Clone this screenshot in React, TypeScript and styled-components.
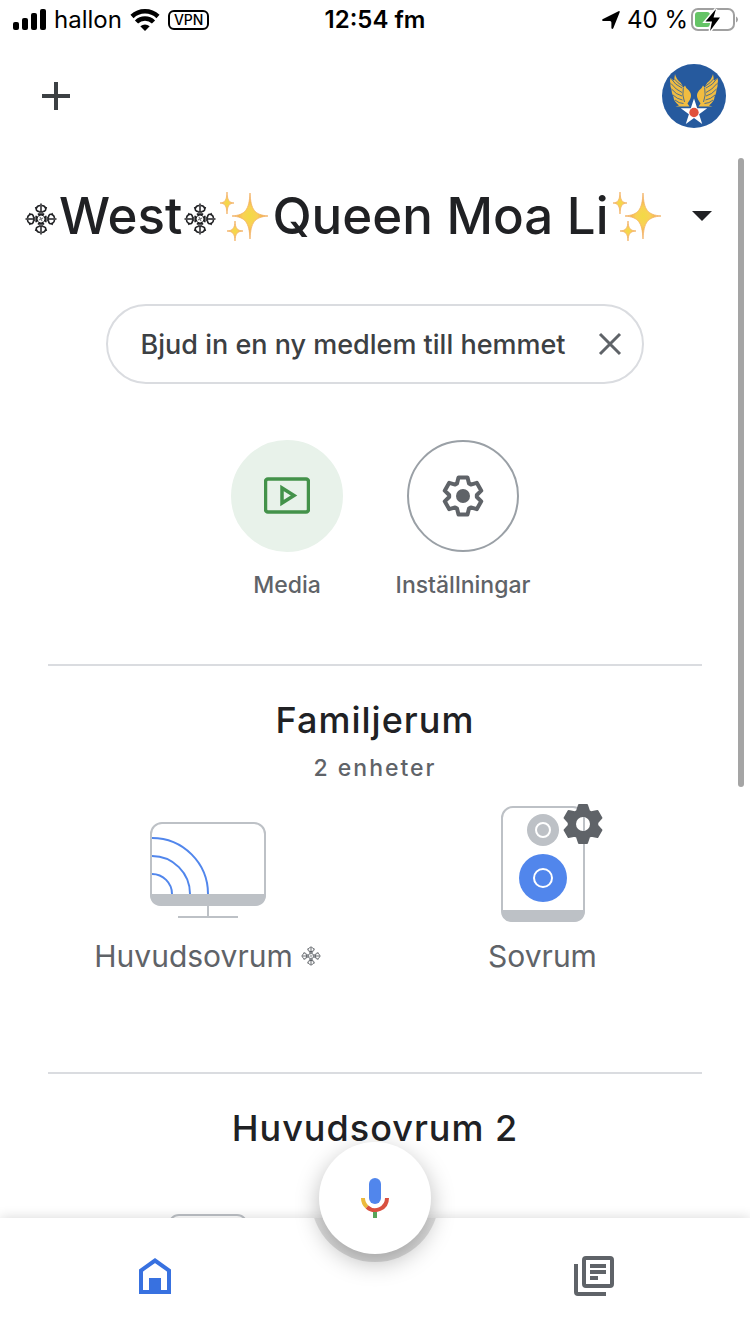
import React from 'react';
import styled, { createGlobalStyle } from 'styled-components';

const ink = '#202124';
const grey = '#5f6368';
const line = '#dadce0';
const device = '#bdc1c6';
const blue = '#5186ec';

const GlobalStyle = createGlobalStyle`
  *, *::before, *::after { box-sizing: border-box; }
  body {
    margin: 0;
    background: #fff;
    color: ${ink};
    font-family: Inter, Roboto, "Liberation Sans", sans-serif;
  }
  h1, h2, p, ul { margin: 0; padding: 0; }
  button { border: 0; padding: 0; background: none; color: inherit; font: inherit; cursor: pointer; }
  svg { display: block; flex: none; }
`;

const Screen = styled.div`
  display: flex;
  flex-direction: column;
  height: 100vh;
  overflow: hidden;
`;

const StatusBar = styled.div`
  display: grid;
  grid-template-columns: 1fr auto 1fr;
  align-items: center;
  height: 40px;
  padding: 0 12px;
  color: #000;
  font-size: 24px;
  line-height: 32px;
`;

const StatusGroup = styled.div<{ $end?: boolean }>`
  display: flex;
  align-items: center;
  justify-content: ${p => (p.$end ? 'flex-end' : 'flex-start')};
  gap: ${p => (p.$end ? 2 : 8)}px;
`;

const Clock = styled.time`
  font-weight: 600;
`;

const VpnTag = styled.span`
  border: 2px solid #000;
  border-radius: 6px;
  padding: 0 4px;
  font-size: 14px;
  line-height: 16px;
  font-weight: 500;
`;

const TopBar = styled.header`
  display: flex;
  flex: none;
  align-items: center;
  justify-content: space-between;
  height: 112px;
  padding: 0 24px 0 40px;
`;

const IconButton = styled.button`
  display: grid;
  place-items: center;
`;

const Content = styled.main`
  position: relative;
  flex: 1;
  min-height: 0;
  overflow: hidden;
`;

const ScrollThumb = styled.div`
  position: absolute;
  top: 6px;
  right: 6px;
  width: 6px;
  height: 59%;
  border-radius: 3px;
  background: #a5a5a5;
`;

const HomePicker = styled.button`
  display: flex;
  align-items: center;
  justify-content: space-between;
  width: 100%;
  height: 128px;
  padding: 0 36px 0 25px;
`;

const HomeName = styled.h1`
  display: flex;
  align-items: center;
  gap: 2px;
  font-size: 51px;
  line-height: 64px;
  font-weight: 500;
  white-space: nowrap;
`;

const Ornament = styled.span`
  padding-top: 6px;
`;

const Chip = styled.div`
  display: flex;
  align-items: center;
  justify-content: space-between;
  width: fit-content;
  height: 80px;
  margin: 24px auto 0;
  padding: 0 20px 0 32px;
  gap: 32px;
  border: 2px solid ${line};
  border-radius: 40px;
  color: #3c4043;
  font-size: 27px;
  font-weight: 500;
`;

const Shortcuts = styled.nav`
  display: flex;
  justify-content: center;
  margin-top: 56px;
`;

const Shortcut = styled.button`
  display: flex;
  flex-direction: column;
  align-items: center;
  gap: 17px;
  width: 176px;
  color: ${grey};
  font-size: 23px;
  line-height: 32px;
  font-weight: 500;
`;

const ShortcutDisc = styled.span<{ $tinted?: boolean }>`
  display: grid;
  place-items: center;
  width: 112px;
  height: 112px;
  border-radius: 50%;
  border: 2px solid ${p => (p.$tinted ? '#e8f2ea' : '#9aa0a6')};
  background: ${p => (p.$tinted ? '#e8f2ea' : '#fff')};
`;

const Room = styled.section<{ $first?: boolean }>`
  margin-top: ${p => (p.$first ? 63 : 96)}px;
`;

const RoomHead = styled.div`
  min-height: 120px;
  margin: 0 48px;
  padding-top: 32px;
  border-top: 2px solid ${line};
  text-align: center;
`;

const RoomTitle = styled.h2`
  font-size: 36px;
  line-height: 44px;
  font-weight: 500;
  letter-spacing: 1px;
`;

const RoomCount = styled.p`
  margin-top: 10px;
  color: ${grey};
  font-size: 23px;
  line-height: 32px;
  font-weight: 500;
  letter-spacing: 2px;
`;

const Devices = styled.ul`
  display: grid;
  grid-template-columns: 1fr 1fr;
  padding: 0 40px;
  margin-top: 14px;
  list-style: none;
`;

const Device = styled.button`
  display: flex;
  flex-direction: column;
  align-items: center;
  gap: 14px;
  width: 100%;
  padding-top: 8px;
  color: ${grey};
`;

const DeviceName = styled.span`
  display: flex;
  align-items: center;
  gap: 8px;
  font-size: 30px;
  line-height: 40px;
  font-weight: 400;
`;

const BottomBar = styled.nav`
  position: relative;
  display: flex;
  flex: none;
  align-items: center;
  justify-content: space-between;
  height: 116px;
  padding: 0 136px;
  background: #fff;
  box-shadow: 0 0 12px rgba(0, 0, 0, 0.16);
`;

const Notch = styled.div`
  position: absolute;
  top: -84px;
  left: 50%;
  width: 128px;
  height: 128px;
  margin-left: -64px;
  border-radius: 50%;
  background: linear-gradient(#e4e4e4 60%, #dedede 90%);
  clip-path: inset(84px 0 0 0);
`;

const MicButton = styled.button`
  position: absolute;
  top: -76px;
  left: 50%;
  display: grid;
  place-items: center;
  width: 112px;
  height: 112px;
  margin-left: -56px;
  border-radius: 50%;
  background: #fff;
  box-shadow: 0 8px 24px rgba(0, 0, 0, 0.28);
`;

/* Cog outline with six teeth, centred on the origin. */
function cogPath(outer: number, inner: number, top: number, base: number) {
  const pts: string[] = [];
  for (let i = 0; i < 6; i++) {
    const a = (i * Math.PI) / 3 - Math.PI / 2;
    const c = Math.cos(a);
    const s = Math.sin(a);
    [[inner, -base], [outer, -top], [outer, top], [inner, base]].forEach(([r, w]) =>
      pts.push(`${(r * c - w * s).toFixed(2)} ${(r * s + w * c).toFixed(2)}`),
    );
  }
  return `M${pts.join('L')}Z`;
}

const Vajra = ({ size }: { size: number }) => (
  <svg width={size} height={size} viewBox="-16 -16 32 32" fill="none" stroke="currentColor" aria-hidden="true">
    <circle r="4" strokeWidth="1" />
    <path d="M-1.500 -2C0 -2 0 -0.500 0 0S0 2 1.500 2M2 -1.500C2 0 0.500 0 0 0S-2 0 -2 1.500" strokeWidth="0.700" />
    {[0, 90, 180, 270].map(a => (
      <g key={a} transform={`rotate(${a})`}>
        <path d="M0 -7V-15.500" strokeWidth="1.500" />
        <path d="M-3.200 -4.800H3.200M-2.200 -7H2.200" strokeWidth="1.700" />
        <path d="M-1.500 -7.500C-4.500 -7.500 -5.500 -9.500 -4.300 -11.500C-3.600 -12.800 -2.200 -13.500 -0.800 -13.500M1.500 -7.500C4.500 -7.500 5.500 -9.500 4.300 -11.500C3.600 -12.800 2.200 -13.500 0.800 -13.500" strokeWidth="1.600" />
        <path d="M-6 -11L-4 -11.500M6 -11L4 -11.500" strokeWidth="1.300" />
      </g>
    ))}
  </svg>
);

/* Four-pointed star with concave sides. */
const star = (x: number, y: number, rx: number, ry: number) => {
  const k = 0.26;
  const n = 0.05;
  return [
    `M${x} ${y - ry}`,
    `C${x + rx * n} ${y - ry * k} ${x + rx * k} ${y - ry * n} ${x + rx} ${y}`,
    `C${x + rx * k} ${y + ry * n} ${x + rx * n} ${y + ry * k} ${x} ${y + ry}`,
    `C${x - rx * n} ${y + ry * k} ${x - rx * k} ${y + ry * n} ${x - rx} ${y}`,
    `C${x - rx * k} ${y - ry * n} ${x - rx * n} ${y - ry * k} ${x} ${y - ry}Z`,
  ].join('');
};

const Sparkles = () => (
  <svg width="52" height="52" viewBox="0 0 52 52" aria-hidden="true">
    <defs>
      <radialGradient id="spark">
        <stop offset="0" stopColor="#f2da45" />
        <stop offset="0.4" stopColor="#f9d155" />
        <stop offset="1" stopColor="#ee9658" />
      </radialGradient>
    </defs>
    <g fill="url(#spark)" stroke="#f3b264" strokeWidth="0.800">
      <path d={star(32, 26, 18, 23)} />
      <path d={star(9, 13, 7, 11)} />
      <path d={star(17, 41, 8, 10)} />
    </g>
  </svg>
);

const SignalIcon = () => (
  <svg width="34" height="24" viewBox="0 0 34 24" aria-hidden="true">
    <rect x="1" y="14" width="6" height="8" rx="2" />
    <rect x="10" y="10" width="6" height="12" rx="2" />
    <rect x="19" y="5" width="6" height="17" rx="2" />
    <rect x="28" y="1" width="6" height="21" rx="2" />
  </svg>
);

const WifiIcon = () => (
  <svg width="30" height="24" viewBox="1 0 30 24" fill="none" stroke="#000" strokeWidth="4.500" aria-hidden="true">
    <path d="M3 8.500A19 19 0 0 1 29 8.500" />
    <path d="M7.500 14A12 12 0 0 1 24.500 14" />
    <path d="M16 23L11.300 18.300Q16 14.500 20.700 18.300Z" fill="#000" stroke="none" />
  </svg>
);

const LocationIcon = () => (
  <svg width="24" height="20" viewBox="0 0 24 20" aria-hidden="true">
    <path d="M17.500 1.200Q19.200 0.800 18.600 2.500L12.300 18.300Q11 19.700 10.400 18V12.500Q10.400 11 9 11H2Q0.200 10.300 1.500 9.200Z" />
  </svg>
);

const BatteryIcon = () => (
  <svg width="48" height="26" viewBox="0 0 48 26" aria-hidden="true">
    <rect x="2" y="2" width="42" height="21" rx="6" fill="none" stroke="#a0a0a0" strokeWidth="2" />
    <path d="M46 9.500Q48 10.500 48 12.500Q48 14.500 46 15.500Z" fill="#a0a0a0" />
    <rect x="5" y="5" width="15" height="15" rx="3" fill="#65c466" />
    <path d="M26 2L15.500 14.500H22L20 24L30 10.500H23.500Z" fill="#000" stroke="#fff" strokeWidth="3" paintOrder="stroke" />
  </svg>
);

const AvatarIcon = () => (
  <svg width="64" height="64" viewBox="0 0 64 64" aria-hidden="true">
    <circle cx="32" cy="32" r="32" fill="#265a9e" />
    {[false, true].map(flip => (
      <g key={String(flip)} transform={flip ? 'translate(64 0) scale(-1 1)' : undefined}>
        <path
          d="M13 10Q14 15 18.500 18.500Q20.500 20.500 21 24L23 21.500Q24 24.500 27 26.500Q30.500 31 28 35.500L25.500 39.500L27.500 42.500H13.500L17 41.500Q11.500 37 11.500 33Q9.500 29 9.500 26Q7.800 22 8.500 19.500Q7.500 17 8.500 14L12 16.500Z"
          fill="#f0bc41"
        />
        <path
          d="M9 14.500Q13 21 20 24M9 19.500Q14 26 20 28.500M9.500 25Q14 30.500 20 32M11 31Q15 35 20.500 36M13 36Q17 39.500 21.500 39.500M12 14.500Q16 19.500 20.500 22M21.300 24Q19.800 31 22.500 38"
          fill="none"
          stroke="#265a9e"
          strokeWidth="0.800"
        />
      </g>
    ))}
    <path d="M32 34.500L35.200 44.200H45.200L37.100 50.200L40.200 60L32 54L23.800 60L26.900 50.200L18.800 44.200H28.800Z" fill="#fff" />
    <circle cx="32" cy="48.500" r="4.700" fill="#e0513c" />
  </svg>
);

const MediaIcon = () => (
  <svg width="46" height="38" viewBox="0 0 46 38" fill="none" stroke="#43924a" aria-hidden="true">
    <rect x="1.500" y="2" width="43" height="33" rx="2.500" strokeWidth="3.500" />
    <path d="M18 11V26L30 18.500Z" strokeWidth="3.500" />
  </svg>
);

const SettingsIcon = () => (
  <svg width="44" height="44" viewBox="-22 -22 44 44" aria-hidden="true">
    <path d={cogPath(18.5, 12.5, 4.5, 6)} fill="none" stroke={grey} strokeWidth="4" strokeLinejoin="round" />
    <circle r="7" fill={grey} />
  </svg>
);

const TvIcon = () => (
  <svg width="116" height="116" viewBox="0 0 116 116" fill="none" aria-hidden="true">
    <path d="M0 88H116Q116 100 104 100H12Q0 100 0 88Z" fill={device} />
    <rect x="1" y="17" width="114" height="82" rx="11" stroke={device} strokeWidth="2" />
    <path d="M58 100V111M28 111H88" stroke={device} strokeWidth="2" />
    <path d="M2 68A20 20 0 0 1 22 88M2 50A38 38 0 0 1 40 88M2 32A56 56 0 0 1 58 88" stroke={blue} strokeWidth="2" />
  </svg>
);

const SpeakerIcon = () => (
  <svg width="124" height="116" viewBox="-20 0 124 116" overflow="visible" fill="none" aria-hidden="true">
    <path d="M0 104H84Q84 116 72 116H12Q0 116 0 104Z" fill={device} />
    <rect x="1" y="1" width="82" height="114" rx="11" stroke={device} strokeWidth="2" />
    <circle cx="42" cy="24" r="16" fill={device} />
    <circle cx="42" cy="24" r="7" stroke="#fff" strokeWidth="2" />
    <circle cx="42" cy="72" r="24" fill={blue} />
    <circle cx="42" cy="72" r="9" stroke="#fff" strokeWidth="2" />
    <g transform="translate(82 18)">
      <path d={cogPath(19, 13, 4, 6)} fill={grey} stroke={grey} strokeWidth="2" strokeLinejoin="round" />
      <circle r="7" fill="#fff" />
      <path d="M1 -7V7" stroke={device} strokeWidth="2" />
    </g>
  </svg>
);

const SmallDeviceIcon = () => (
  <svg width="80" height="116" viewBox="0 0 80 116" fill="none" aria-hidden="true">
    <rect x="1" y="1" width="78" height="114" rx="10" stroke={device} strokeWidth="2" />
  </svg>
);

const MicIcon = () => (
  <svg width="28" height="40" viewBox="0 0 28 40" fill="none" aria-hidden="true">
    <rect x="8" y="0" width="12" height="26" rx="6" fill={blue} />
    <path d="M2 20A12 12 0 0 0 6 29" stroke="#ebb93c" strokeWidth="4" />
    <path d="M6 29A12 12 0 0 0 26 20" stroke="#d9503f" strokeWidth="4" />
    <path d="M14 34V40" stroke="#57a55a" strokeWidth="4" />
  </svg>
);

const HomeIcon = () => (
  <svg width="40" height="40" viewBox="0 0 40 40" aria-hidden="true">
    <path d="M5 36V14.500L19 4.500L33 14.500V36Z" fill="none" stroke="#3871e0" strokeWidth="4" />
    <rect x="13" y="22" width="12" height="14" fill="#3871e0" />
  </svg>
);

const FeedIcon = () => (
  <svg width="40" height="40" viewBox="0 0 40 40" fill="none" stroke={grey} strokeWidth="4" aria-hidden="true">
    <rect x="10" y="2" width="28" height="28" rx="2" />
    <path d="M2 8V36Q2 38 4 38H32M16 10H32M16 16H32M16 22H24" />
  </svg>
);

export default function App() {
  return (
    <Screen>
      <GlobalStyle />
      <StatusBar>
        <StatusGroup>
          <SignalIcon />
          <span>hallon</span>
          <WifiIcon />
          <VpnTag>VPN</VpnTag>
        </StatusGroup>
        <Clock>12:54 fm</Clock>
        <StatusGroup $end>
          <LocationIcon />
          <span>40 %</span>
          <BatteryIcon />
        </StatusGroup>
      </StatusBar>

      <TopBar>
        <IconButton aria-label="Lägg till">
          <svg width="32" height="32" viewBox="0 0 32 32" stroke="#3c4043" strokeWidth="4" aria-hidden="true">
            <path d="M16 2V30M2 16H30" />
          </svg>
        </IconButton>
        <IconButton aria-label="Konto">
          <AvatarIcon />
        </IconButton>
      </TopBar>

      <Content>
        <HomePicker aria-haspopup="listbox">
          <HomeName>
            <Ornament><Vajra size={32} /></Ornament>
            <span>West</span>
            <Ornament><Vajra size={32} /></Ornament>
            <Sparkles />
            <span>Queen Moa Li</span>
            <Sparkles />
          </HomeName>
          <svg width="24" height="12" viewBox="0 0 24 12" aria-hidden="true">
            <path d="M2 1H22L12 11Z" fill={ink} />
          </svg>
        </HomePicker>

        <Chip>
          <span>Bjud in en ny medlem till hemmet</span>
          <IconButton aria-label="Stäng">
            <svg width="24" height="24" viewBox="0 0 24 24" stroke={grey} strokeWidth="3" aria-hidden="true">
              <path d="M2 2L22 22M22 2L2 22" />
            </svg>
          </IconButton>
        </Chip>

        <Shortcuts>
          <Shortcut>
            <ShortcutDisc $tinted><MediaIcon /></ShortcutDisc>
            Media
          </Shortcut>
          <Shortcut>
            <ShortcutDisc><SettingsIcon /></ShortcutDisc>
            Inställningar
          </Shortcut>
        </Shortcuts>

        <Room $first>
          <RoomHead>
            <RoomTitle>Familjerum</RoomTitle>
            <RoomCount>2 enheter</RoomCount>
          </RoomHead>
          <Devices>
            <li>
              <Device>
                <TvIcon />
                <DeviceName>Huvudsovrum <Vajra size={20} /></DeviceName>
              </Device>
            </li>
            <li>
              <Device>
                <SpeakerIcon />
                <DeviceName>Sovrum</DeviceName>
              </Device>
            </li>
          </Devices>
        </Room>

        <Room>
          <RoomHead>
            <RoomTitle>Huvudsovrum 2</RoomTitle>
          </RoomHead>
          <Devices>
            <li>
              <Device aria-label="Enhet">
                <SmallDeviceIcon />
              </Device>
            </li>
          </Devices>
        </Room>

        <ScrollThumb />
      </Content>

      <BottomBar>
        <IconButton aria-label="Hem"><HomeIcon /></IconButton>
        <IconButton aria-label="Flöde"><FeedIcon /></IconButton>
        <Notch />
        <MicButton aria-label="Assistent"><MicIcon /></MicButton>
      </BottomBar>
    </Screen>
  );
}
